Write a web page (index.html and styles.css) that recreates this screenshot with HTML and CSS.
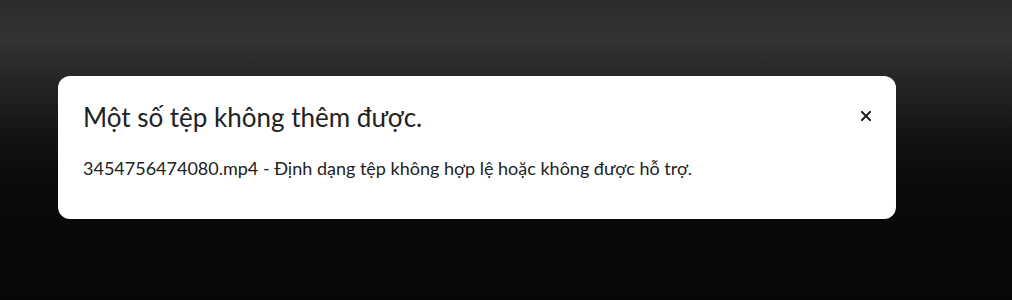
FILE: index.html
```html
<!DOCTYPE html>
<html lang="vi">
<head>
<meta charset="utf-8">
<title>Lỗi thêm tệp</title>
<link rel="stylesheet" href="styles.css">
</head>
<body>
<div class="overlay">
  <div class="dialog" role="alertdialog">
    <div class="dialog-head">
      <h2 class="dialog-title">Một số tệp không thêm được.</h2>
      <button class="close" aria-label="Đóng">
        <svg width="10" height="10" viewBox="0 0 10 10"><path d="M1 1L9 9M9 1L1 9" stroke="#222" stroke-width="2.1" stroke-linecap="square"/></svg>
      </button>
    </div>
    <p class="dialog-msg">3454756474080.mp4 - Định dạng tệp không hợp lệ hoặc không được hỗ trợ.</p>
  </div>
</div>
</body>
</html>
```
FILE: styles.css
```css
html, body {
  margin: 0;
  height: 100%;
}
body {
  font-family: Lato, "Liberation Sans", sans-serif;
  background: linear-gradient(to bottom, #2b2b2b 0px, #333333 40px, #222222 90px, #141614 130px, #0b0d0b 170px, #070907 230px, #060806 300px);
  overflow: hidden;
}
.overlay {
  padding: 76px 116px 0 58px;
}
.dialog {
  background: #ffffff;
  border-radius: 12px;
  padding: 26px 25px 40px 25px;
  color: #222222;
}
.dialog-head {
  display: flex;
  align-items: flex-start;
  justify-content: space-between;
}
.dialog-title {
  margin: 0;
  font-size: 26px;
  font-weight: 400;
  line-height: 31px;
  color: #222222;
}
.close {
  border: 0;
  background: none;
  padding: 0;
  margin-top: 9px;
  width: 10px;
  height: 10px;
  display: flex;
  cursor: pointer;
}
.dialog-msg {
  margin: 24px 0 0;
  font-size: 18px;
  line-height: 22px;
  color: #222222;
}
```
